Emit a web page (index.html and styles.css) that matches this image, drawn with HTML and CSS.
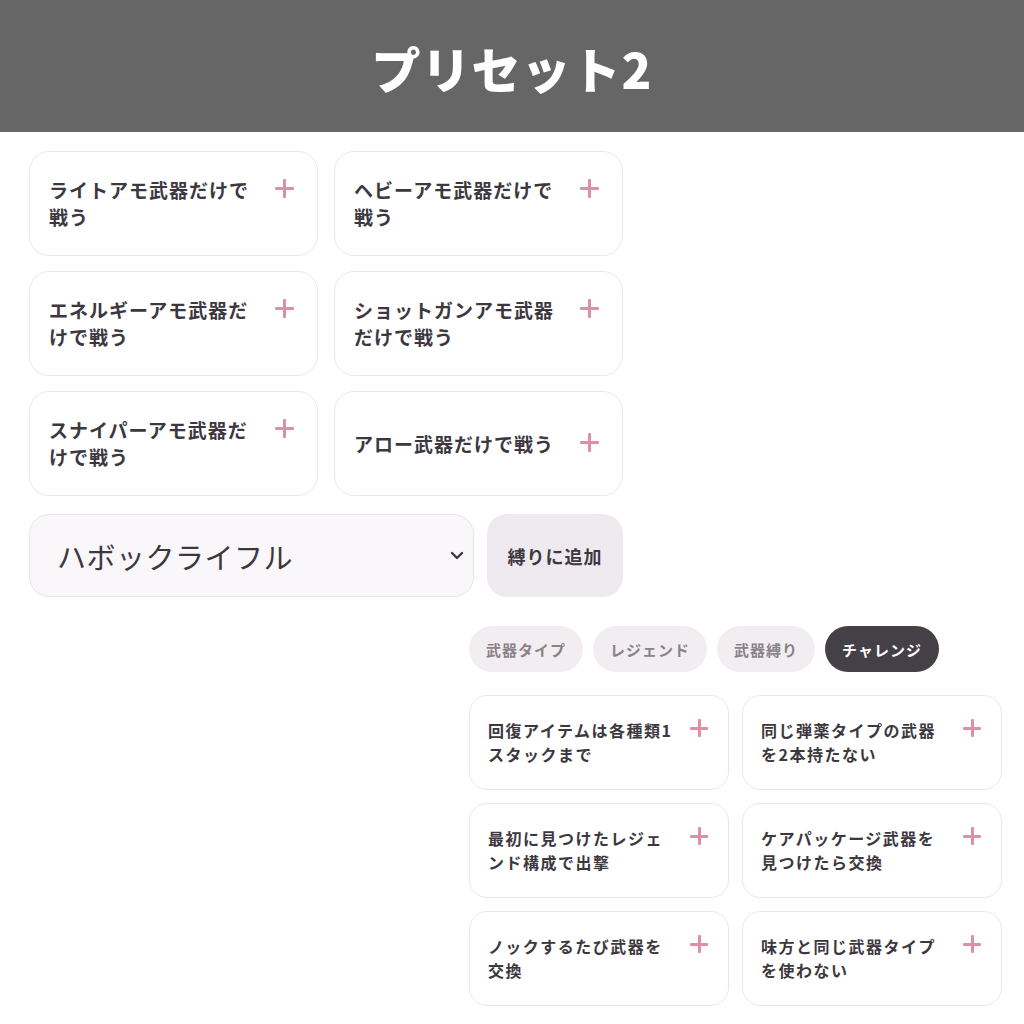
FILE: index.html
```html
<!DOCTYPE html>
<html lang="ja">
<head>
<meta charset="utf-8">
<link rel="stylesheet" href="styles.css">
</head>
<body>
<header class="header"><h1 class="title">プリセット2</h1></header>
<main class="main">
  <section class="weapons">
    <div class="grid-top">
      <div class="card"><div class="card-row"><span class="card-text">ライトアモ武器だけで戦う</span><span class="plus"></span></div></div>
      <div class="card"><div class="card-row"><span class="card-text">ヘビーアモ武器だけで戦う</span><span class="plus"></span></div></div>
      <div class="card"><div class="card-row"><span class="card-text">エネルギーアモ武器だけで戦う</span><span class="plus"></span></div></div>
      <div class="card"><div class="card-row"><span class="card-text">ショットガンアモ武器だけで戦う</span><span class="plus"></span></div></div>
      <div class="card"><div class="card-row"><span class="card-text">スナイパーアモ武器だけで戦う</span><span class="plus"></span></div></div>
      <div class="card"><div class="card-row"><span class="card-text">アロー武器だけで戦う</span><span class="plus"></span></div></div>
    </div>
    <div class="select-row">
      <div class="select"><span class="select-text">ハボックライフル</span>
        <svg class="chev" width="14" height="9" viewBox="0 0 14 9"><path d="M2 2 L7 7 L12 2" fill="none" stroke="#3d383f" stroke-width="2.4" stroke-linecap="round" stroke-linejoin="round"/></svg>
      </div>
      <button class="add-btn">縛りに追加</button>
    </div>
  </section>
  <section class="panel">
    <div class="tabs">
      <span class="tab">武器タイプ</span>
      <span class="tab">レジェンド</span>
      <span class="tab">武器縛り</span>
      <span class="tab tab-active">チャレンジ</span>
    </div>
    <div class="grid-bottom">
      <div class="card card-sm"><div class="card-row"><span class="card-text">回復アイテムは各種類1スタックまで</span><span class="plus"></span></div></div>
      <div class="card card-sm"><div class="card-row"><span class="card-text">同じ弾薬タイプの武器を2本持たない</span><span class="plus"></span></div></div>
      <div class="card card-sm"><div class="card-row"><span class="card-text">最初に見つけたレジェンド構成で出撃</span><span class="plus"></span></div></div>
      <div class="card card-sm"><div class="card-row"><span class="card-text">ケアパッケージ武器を見つけたら交換</span><span class="plus"></span></div></div>
      <div class="card card-sm"><div class="card-row"><span class="card-text">ノックするたび武器を交換</span><span class="plus"></span></div></div>
      <div class="card card-sm"><div class="card-row"><span class="card-text">味方と同じ武器タイプを使わない</span><span class="plus"></span></div></div>
    </div>
  </section>
</main>
</body>
</html>
```

FILE: styles.css
```css
* { box-sizing: border-box; }
html, body { margin: 0; padding: 0; background: #ffffff; }
body {
  font-family: "Noto Sans CJK JP", "Noto Sans", sans-serif;
  color: #3d383f;
  width: 1024px;
  height: 1024px;
  overflow: hidden;
}
.header {
  height: 132px;
  background: #666666;
  display: flex;
  align-items: center;
  justify-content: center;
}
.title {
  margin: 0;
  color: #ffffff;
  font-size: 49px;
  font-weight: 900;
  letter-spacing: 1px;
  line-height: 1;
  padding-top: 2px;
}
.main {
  padding: 19px 22px 0 29px;
  display: flex;
  flex-direction: column;
}
.weapons { width: 594px; }
.grid-top {
  display: grid;
  grid-template-columns: 289px 289px;
  column-gap: 16px;
  row-gap: 15px;
}
.card {
  background: #ffffff;
  border: 1.5px solid #ebe6eb;
  border-radius: 20px;
  padding: 24px 23px 25px 19px;
  display: flex;
  align-items: center;
}
.card-row {
  display: flex;
  align-items: flex-start;
  width: 100%;
  gap: 10px;
}
.card-text {
  flex: 1;
  font-size: 19px;
  font-weight: 700;
  line-height: 27px;
  letter-spacing: 1px;
}
.plus {
  position: relative;
  flex: none;
  width: 19px;
  height: 27px;
}
.plus::before, .plus::after {
  content: "";
  position: absolute;
  background: #df8fa3;
  border-radius: 1px;
}
.plus::before { left: 0; top: 11px; width: 19px; height: 3px; }
.plus::after { left: 8px; top: 3px; width: 3px; height: 19px; }
.select-row {
  display: flex;
  gap: 13px;
  margin-top: 18px;
  height: 83px;
}
.select {
  width: 445px;
  background: #f9f7fa;
  border: 1.5px solid #e9e4e9;
  border-radius: 20px;
  display: flex;
  align-items: center;
  justify-content: space-between;
  padding: 0 8px 0 27px;
}
.select-text {
  font-size: 29px;
  font-weight: 400;
  letter-spacing: 0.5px;
  color: #3d383f;
}
.chev { margin-right: 1px; }
.add-btn {
  width: 136px;
  border: none;
  background: #efeaef;
  border-radius: 20px;
  font-family: inherit;
  color: #3d383f;
  font-size: 18px;
  font-weight: 700;
  letter-spacing: 1px;
  padding: 0;
}
.panel {
  width: 533px;
  margin-left: auto;
  margin-top: 29px;
}
.tabs {
  display: flex;
  gap: 10px;
}
.tab {
  height: 46px;
  padding: 0 17px;
  border-radius: 23px;
  background: #f1edf1;
  color: #8a8189;
  font-size: 15px;
  font-weight: 700;
  letter-spacing: 1px;
  display: flex;
  align-items: center;
}
.tab-active {
  background: #453f47;
  color: #ffffff;
}
.grid-bottom {
  margin-top: 23px;
  display: grid;
  grid-template-columns: 260px 260px;
  column-gap: 13px;
  row-gap: 13px;
}
.card-sm {
  padding: 22px 20px 23px 18px;
  border-radius: 18px;
}
.card-sm .card-row { gap: 13px; }
.card-sm .card-text {
  font-size: 16px;
  line-height: 24px;
  letter-spacing: 1.5px;
}
.card-sm .plus { width: 18px; height: 24px; }
.card-sm .plus::before { top: 9px; width: 18px; }
.card-sm .plus::after { top: 1px; left: 7.5px; height: 18px; }
```
